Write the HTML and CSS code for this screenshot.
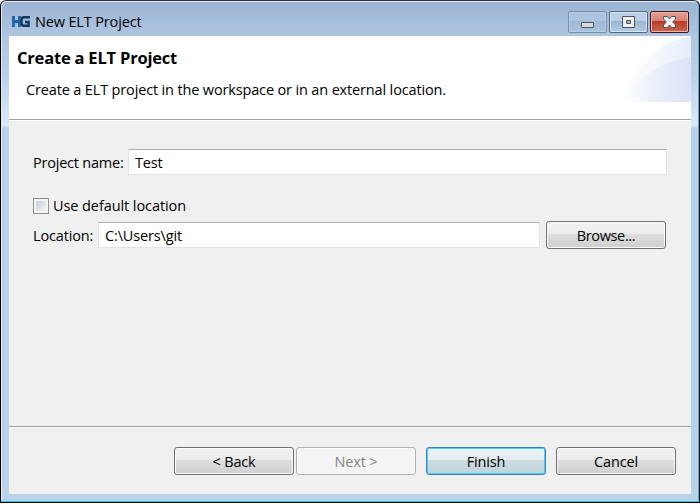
FILE: index.html
```
<!DOCTYPE html>
<html lang="en">
<head>
<meta charset="utf-8">
<title>New ELT Project</title>
<link rel="stylesheet" href="styles.css">
</head>
<body>
<div class="window">
  <header class="titlebar">
    <svg class="logo" width="18" height="12" viewBox="0 0 18 12">
      <path d="M1.5 0v11M1.5 5.5h6M7.500 0v11" fill="none" stroke="#1964ac" stroke-width="2.800"/>
      <path d="M18 1.300H12Q9.500 1.300 9.500 4v3q0 2.700 2.500 2.700h4.600V6H13" fill="none" stroke="#12375f" stroke-width="2.400"/>
    </svg>
    <span class="caption">New ELT Project</span>
    <div class="controls">
      <span class="control minimize"><svg width="39" height="22"><rect x="13.500" y="11.500" width="12" height="5" rx=".5" fill="#d9d9d9" stroke="#4f5561"/></svg></span>
      <span class="control"><svg width="39" height="22"><path d="M13.500 5.500h12v11h-12zM17.500 9.500v3h4v-3z" fill="#f0f0f0" fill-rule="evenodd" stroke="#4f5561"/></svg></span>
      <span class="control close"><svg width="39" height="22"><path d="M13.500 5.500h4l2 2.500 2-2.500h4v2.500L22.700 11l2.800 3v2.500h-4l-2-2.500-2 2.500h-4V14l2.800-3-2.800-3z" fill="#f3f3f3" stroke="#565865" stroke-linejoin="round"/></svg></span>
    </div>
  </header>
  <main class="client">
    <section class="banner">
      <svg class="swoosh" width="73" height="66" viewBox="0 0 73 66">
        <defs>
          <linearGradient id="outer"><stop offset="0" stop-color="#fff"/><stop offset=".3" stop-color="#fafbfe"/><stop offset="1" stop-color="#e7edfa"/></linearGradient>
          <linearGradient id="inner"><stop offset=".1" stop-color="#f4f7fd" stop-opacity="0"/><stop offset=".5" stop-color="#eaeffa"/><stop offset="1" stop-color="#dbe3f6"/></linearGradient>
        </defs>
        <path d="M0 66C14 36 38 5 73 0v66z" fill="url(#outer)"/>
        <path d="M0 66C15 47 40 26 73 21v45z" fill="url(#inner)"/>
      </svg>
      <h1>Create a ELT Project</h1>
      <p>Create a ELT project in the workspace or in an external location.</p>
    </section>
    <section class="form">
      <label class="row project"><span class="name-label">Project name:</span><input type="text" value="Test"></label>
      <label class="row check"><span class="box"></span><span class="check-label">Use default location</span></label>
      <div class="row place"><span class="loc-label">Location:</span><input type="text" value="C:\Users\git"><button class="browse">Browse...</button></div>
    </section>
    <footer>
      <button>&lt; Back</button><button disabled>Next &gt;</button><button class="primary">Finish</button><button class="cancel">Cancel</button>
    </footer>
  </main>
</div>
</body>
</html>
```
FILE: styles.css
```
* { box-sizing: border-box; }
body {
  margin: 0; width: 700px; height: 504px; overflow: hidden;
  background: #f8f9f8; color: #000;
  font: 14.5px/20px "Open Sans", "Noto Sans", sans-serif;
  letter-spacing: -.15px;
}
.window {
  width: 700px; height: 503px; padding: 1px 7px 7px 8px;
  border: 1px solid #000; border-top-color: #30343b; border-radius: 6px 6px 0 0;
  background: linear-gradient(#9ab4d2, #adc5e0 34px, #bbd1ea 75px, #dce8f6 124px, #bad1ea 127px);
  box-shadow: inset -1px -1px #2bc5df, inset 1px 1px #e0ebf6;
}
.titlebar { height: 34px; display: flex; align-items: flex-start; padding: 10px 3px 0 3px; }
.logo { margin-top: 4px; }
.caption { margin: 0 auto 0 5px; white-space: nowrap; }
.controls { display: flex; gap: 2px; margin-top: -1px; }
.control {
  width: 39px; height: 22px; border: 1px solid #52687f; border-radius: 2px;
  background: linear-gradient(#bbd0e6 45%, #9bb5d1 45%, #b4cde6);
  box-shadow: inset 0 0 0 1px #d8e6f4;
}
.control svg { display: block; margin: -1px; }
.minimize { border-color: #7690ad; background: linear-gradient(#acc4df 45%, #9fb9d5 45%, #aac4df); box-shadow: inset 0 0 0 1px #b9cee4; }
.close { border-color: #431422; background: linear-gradient(#e5a093, #d98072 45%, #b93c24 45%, #cc6550); box-shadow: inset 0 0 0 1px #edb6aa; }
.client { height: 458px; width: 682px; background: #f0f0f0; display: flex; flex-direction: column; }
.banner { position: relative; height: 85px; background: #fff; border-bottom: 1px solid #fff; box-shadow: inset 0 -1px #a0a0a0; padding: 12px 8px 0; }
.swoosh { position: absolute; right: 0; top: 0; }
h1 { font-size: 16.5px; line-height: 20px; letter-spacing: -.2px; margin: 0; }
p { margin: 12px 0 0 9px; }
.form { flex: 1; padding: 28px 25px 0 24px; }
.row { display: flex; align-items: center; height: 26px; white-space: nowrap; }
.project { margin-right: -1px; }
.name-label { width: 95px; padding-top: 2px; letter-spacing: -.22px; }
.loc-label { width: 65px; padding-top: 2px; }
input {
  flex: 1; min-width: 0; height: 26px; padding: 1px 6px 0; background: #fff;
  border: 1px solid #e2e3ea; border-top-color: #abadb3; border-radius: 1px;
  font: inherit; letter-spacing: inherit; color: #000; outline: none;
}
.check { height: 20px; margin-top: 21px; }
.check-label { letter-spacing: -.08px; }
.box { width: 16px; height: 16px; border: 1px solid #8e8f8f; background: linear-gradient(135deg, #cbcfd5, #f6f6f6) content-box, #f4f4f4; padding: 2px; margin-right: 4px; }
.place { height: 28px; margin-top: 5px; }
button {
  width: 120px; height: 28px; padding: 1px 0 0; border: 1px solid #707070; border-radius: 3px;
  background: linear-gradient(#f2f2f2, #ebebeb 48%, #dddddd 48%, #cfcfcf);
  box-shadow: inset 0 0 0 1px #fafafa; font: inherit; letter-spacing: inherit; color: #000;
}
button:disabled { border-color: #adb2b5; background: #f4f4f4; color: #838383; }
.browse { margin-left: 6px; letter-spacing: -.35px; }
footer { height: 68px; border-top: 1px solid #a0a0a0; box-shadow: inset 0 1px #fff; padding: 20px 15px 0; display: flex; justify-content: flex-end; gap: 2px; }
.primary { margin-left: 8px; border-color: #3c7fb1; background: linear-gradient(#edf2f4, #e3ecf0 48%, #cfdce3 48%, #c1d2da); box-shadow: inset 0 0 0 1px #48d2f5; }
.cancel { margin-left: 8px; }
```
